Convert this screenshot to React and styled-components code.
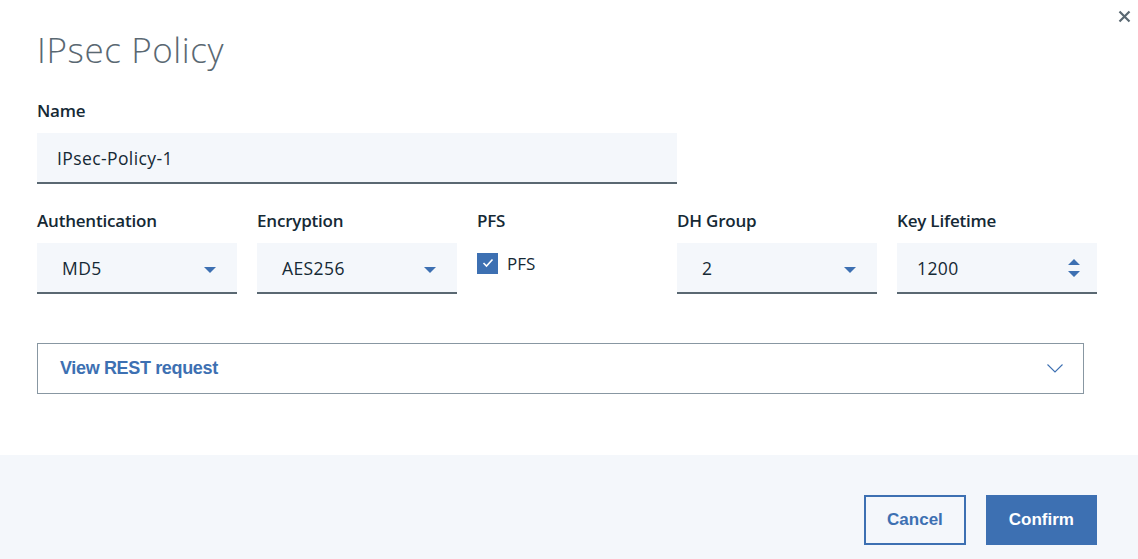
import React from 'react'
import styled, { createGlobalStyle } from 'styled-components'

const GlobalStyle = createGlobalStyle`
  html, body {
    margin: 0;
    padding: 0;
    background: #fff;
  }
  body {
    font-family: "Open Sans", "Noto Sans", sans-serif;
    color: #152935;
  }
`

const Modal = styled.div`
  width: 1138px;
  height: 559px;
  display: flex;
  flex-direction: column;
  position: relative;
  background: #fff;
`

const Body = styled.div`
  flex: 1;
  padding: 26px 41px 0 37px;
`

const Title = styled.h1`
  margin: 0;
  font-family: "Open Sans", sans-serif;
  font-weight: 300;
  font-size: 35px;
  line-height: 48px;
  color: #5a6872;
  letter-spacing: 0.6px;
`

const CloseButton = styled.button`
  position: absolute;
  top: 7px;
  right: 5px;
  width: 18px;
  height: 18px;
  padding: 0;
  border: none;
  background: transparent;
  display: flex;
  align-items: center;
  justify-content: center;
  cursor: pointer;
`

const Field = styled.div`
  display: flex;
  flex-direction: column;
`

const Label = styled.label`
  font-family: "Open Sans", sans-serif;
  font-weight: 600;
  font-size: 17px;
  line-height: 20px;
  color: #152935;
  margin-bottom: 12px;
  letter-spacing: -0.2px;
`

const NameField = styled(Field)`
  margin-top: 27px;
  width: 640px;
`

const InputBox = styled.div`
  height: 49px;
  background: #f4f7fb;
  border-bottom: 2px solid #5a6872;
  display: flex;
  align-items: center;
  justify-content: space-between;
  padding: 0 ${p => p.$right || '20px'} 0 ${p => p.$left || '20px'};
  font-family: "Open Sans", sans-serif;
  font-size: 17.5px;
  color: #152935;
  letter-spacing: 0.4px;
`

const Row = styled.div`
  margin-top: 27px;
  display: grid;
  grid-template-columns: 200px 200px 180px 200px 200px;
  column-gap: 20px;
`

const CheckRow = styled.div`
  display: flex;
  align-items: center;
  gap: 9px;
  height: 40px;
  font-family: "Open Sans", sans-serif;
  font-size: 17px;
  color: #152935;
`

const Checkbox = styled.span`
  width: 21px;
  height: 21px;
  background: #3d70b2;
  display: flex;
  align-items: center;
  justify-content: center;
`

const Accordion = styled.div`
  margin-top: 49px;
  width: 1047px;
  height: 51px;
  border: 1px solid #8897a2;
  display: flex;
  align-items: center;
  justify-content: space-between;
  padding: 0 20px 0 22px;
  box-sizing: border-box;
`

const AccordionTitle = styled.span`
  font-family: "Liberation Sans", Arial, sans-serif;
  font-weight: 700;
  font-size: 18px;
  letter-spacing: -0.35px;
  color: #3d70b2;
`

const Footer = styled.div`
  height: 104px;
  background: #f4f7fb;
  display: flex;
  justify-content: flex-end;
  align-items: flex-start;
  gap: 20px;
  padding: 40px 41px 0 0;
  box-sizing: border-box;
`

const Button = styled.button`
  height: 50px;
  padding: 0 21px;
  border: 2px solid #3d70b2;
  background: ${p => (p.$primary ? '#3d70b2' : 'transparent')};
  color: ${p => (p.$primary ? '#fff' : '#3d70b2')};
  font-family: "Liberation Sans", Arial, sans-serif;
  font-weight: 700;
  font-size: 17px;
  cursor: pointer;
`

const Caret = () => (
  <svg width="12" height="6" viewBox="0 0 12 6" style={{ marginTop: 5 }}>
    <path d="M0 0h12L6 6z" fill="#3d70b2" />
  </svg>
)

const Spinner = () => (
  <svg width="12" height="18" viewBox="0 0 12 18">
    <path d="M0 6L6 0l6 6z M0 12h12L6 18z" fill="#3d70b2" />
  </svg>
)

const Select = ({ value }) => (
  <InputBox $left="25px" $right="21px">
    <span>{value}</span>
    <Caret />
  </InputBox>
)

export default function App() {
  return (
    <>
      <GlobalStyle />
      <Modal>
        <CloseButton aria-label="close">
          <svg width="13" height="13" viewBox="0 0 13 13">
            <path d="M1.5 1.5l10 10M11.5 1.5l-10 10" stroke="#5a6872" strokeWidth="2.2" />
          </svg>
        </CloseButton>
        <Body>
          <Title>IPsec Policy</Title>
          <NameField>
            <Label>Name</Label>
            <InputBox>IPsec-Policy-1</InputBox>
          </NameField>
          <Row>
            <Field>
              <Label>Authentication</Label>
              <Select value="MD5" />
            </Field>
            <Field>
              <Label>Encryption</Label>
              <Select value="AES256" />
            </Field>
            <Field>
              <Label>PFS</Label>
              <CheckRow>
                <Checkbox>
                  <svg width="12" height="10" viewBox="0 0 12 10">
                    <path d="M1.5 5l3 3 6-6.5" stroke="#fff" strokeWidth="1.6" fill="none" />
                  </svg>
                </Checkbox>
                PFS
              </CheckRow>
            </Field>
            <Field>
              <Label>DH Group</Label>
              <Select value="2" />
            </Field>
            <Field>
              <Label>Key Lifetime</Label>
              <InputBox $right="17px">
                <span>1200</span>
                <Spinner />
              </InputBox>
            </Field>
          </Row>
          <Accordion>
            <AccordionTitle>View REST request</AccordionTitle>
            <svg width="16" height="9" viewBox="0 0 16 9">
              <path d="M0.5 0.5l7.5 7.5 7.5-7.5" stroke="#3d70b2" strokeWidth="1.1" fill="none" />
            </svg>
          </Accordion>
        </Body>
        <Footer>
          <Button>Cancel</Button>
          <Button $primary>Confirm</Button>
        </Footer>
      </Modal>
    </>
  )
}
